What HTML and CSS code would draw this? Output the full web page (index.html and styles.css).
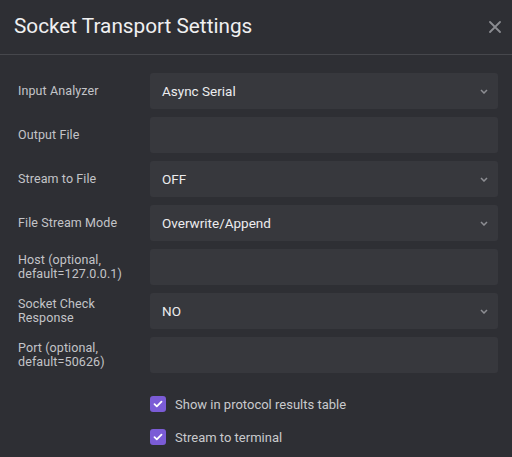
FILE: index.html
```html
<!DOCTYPE html>
<html>
<head>
<meta charset="utf-8">
<link rel="stylesheet" href="styles.css">
</head>
<body>
<div class="dialog">
  <header class="header">
    <h1 class="title">Socket Transport Settings</h1>
    <button class="close" aria-label="Close">
      <svg width="12" height="12" viewBox="0 0 12 12"><path d="M1 1L11 11M11 1L1 11" stroke="currentColor" stroke-width="1.8" stroke-linecap="round"/></svg>
    </button>
  </header>
  <div class="body">
    <div class="form">
      <label class="label">Input Analyzer</label>
      <div class="field select"><span>Async Serial</span><svg class="chev" width="8" height="5" viewBox="0 0 8 5"><path d="M1 1L4 4L7 1" fill="none" stroke="currentColor" stroke-width="1.5"/></svg></div>

      <label class="label">Output File</label>
      <div class="field"></div>

      <label class="label">Stream to File</label>
      <div class="field select"><span>OFF</span><svg class="chev" width="8" height="5" viewBox="0 0 8 5"><path d="M1 1L4 4L7 1" fill="none" stroke="currentColor" stroke-width="1.5"/></svg></div>

      <label class="label">File Stream Mode</label>
      <div class="field select"><span>Overwrite/Append</span><svg class="chev" width="8" height="5" viewBox="0 0 8 5"><path d="M1 1L4 4L7 1" fill="none" stroke="currentColor" stroke-width="1.5"/></svg></div>

      <label class="label">Host (optional, default=127.0.0.1)</label>
      <div class="field"></div>

      <label class="label">Socket Check Response</label>
      <div class="field select"><span>NO</span><svg class="chev" width="8" height="5" viewBox="0 0 8 5"><path d="M1 1L4 4L7 1" fill="none" stroke="currentColor" stroke-width="1.5"/></svg></div>

      <label class="label">Port (optional, default=50626)</label>
      <div class="field"></div>
    </div>
    <div class="checks">
      <div class="check"><span class="box"><svg width="10" height="8" viewBox="0 0 10 8"><path d="M1.5 4.2L3.8 6.3L8.5 1.7" fill="none" stroke="#fff" stroke-width="1.8" stroke-linecap="round" stroke-linejoin="round"/></svg></span><span class="check-label">Show in protocol results table</span></div>
      <div class="check"><span class="box"><svg width="10" height="8" viewBox="0 0 10 8"><path d="M1.5 4.2L3.8 6.3L8.5 1.7" fill="none" stroke="#fff" stroke-width="1.8" stroke-linecap="round" stroke-linejoin="round"/></svg></span><span class="check-label">Stream to terminal</span></div>
    </div>
  </div>
</div>
</body>
</html>
```

FILE: styles.css
```css
* { box-sizing: border-box; }
html, body { margin: 0; padding: 0; }
body {
  background: #2e2f34;
  font-family: Roboto, Inter, "Noto Sans", sans-serif;
  width: 512px;
  height: 457px;
  overflow: hidden;
}
.dialog { width: 512px; }
.header {
  height: 55px;
  display: flex;
  align-items: center;
  justify-content: space-between;
  padding: 0 10px 2px 14px;
  border-bottom: 1px solid #46474c;
}
.title {
  margin: 0;
  font-size: 20.75px;
  font-weight: 400;
  color: #f0f0f1;
}
.close {
  background: none;
  border: 0;
  padding: 0;
  color: #8b8c91;
  display: flex;
  width: 14px;
  height: 14px;
  align-items: center;
  justify-content: center;
  margin-top: 2px;
}
.body { padding: 18px 14px 0 18px; }
.form {
  display: grid;
  grid-template-columns: 120px 1fr;
  column-gap: 12px;
  row-gap: 8px;
}
.label {
  font-size: 12.5px;
  line-height: 14px;
  color: #c3c4c8;
  align-self: center;
  letter-spacing: 0.1px;
}
.field {
  height: 36px;
  background: #37383d;
  border-radius: 3px;
  display: flex;
  align-items: center;
  justify-content: space-between;
  padding: 0 10px 0 12px;
  font-size: 13.5px;
  color: #ececee;
  font-weight: 400;
}
.chev { color: #8d8e93; }
.checks {
  margin-top: 23px;
  padding-left: 132px;
  display: flex;
  flex-direction: column;
  gap: 17px;
}
.check { display: flex; align-items: center; gap: 9px; height: 16px; }
.box {
  width: 16px;
  height: 16px;
  border-radius: 3px;
  background: #7b5cd6;
  display: flex;
  align-items: center;
  justify-content: center;
}
.check-label {
  font-size: 13px;
  color: #c9cacd;
  font-weight: 400;
}
```
